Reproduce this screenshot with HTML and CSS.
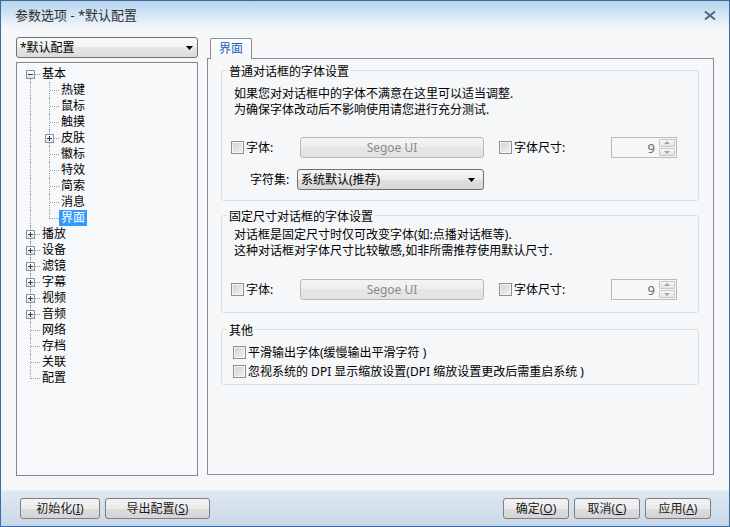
FILE: index.html
```html
<!DOCTYPE html>
<html lang="zh-CN">
<head>
<meta charset="utf-8">
<title>参数选项</title>
<link rel="stylesheet" href="styles.css">
</head>
<body>
<div class="window">
  <header class="titlebar">
    <span class="title">参数选项 - *默认配置</span>
    <svg class="close" width="12" height="9" viewBox="0 0 12 9"><path d="M1 0.5L11 8.5M11 0.5L1 8.5" stroke="#56677d" stroke-width="2" fill="none"/></svg>
  </header>

  <main class="main">
    <aside class="left">
      <div class="combo">
        <span class="combo-text">*默认配置</span>
        <svg class="arrow" width="7" height="4" viewBox="0 0 7 4"><path d="M0 0H7L3.5 4Z" fill="#000"/></svg>
      </div>
      <ul class="tree">
        <li class="row"><span class="g root"><i class="exp minus"></i></span><span class="lbl">基本</span></li>
        <li class="row"><span class="g v"></span><span class="g t"></span><span class="lbl">热键</span></li>
        <li class="row"><span class="g v"></span><span class="g t"></span><span class="lbl">鼠标</span></li>
        <li class="row"><span class="g v"></span><span class="g t"></span><span class="lbl">触摸</span></li>
        <li class="row"><span class="g v"></span><span class="g t"><i class="exp plus"></i></span><span class="lbl">皮肤</span></li>
        <li class="row"><span class="g v"></span><span class="g t"></span><span class="lbl">徽标</span></li>
        <li class="row"><span class="g v"></span><span class="g t"></span><span class="lbl">特效</span></li>
        <li class="row"><span class="g v"></span><span class="g t"></span><span class="lbl">简索</span></li>
        <li class="row"><span class="g v"></span><span class="g t"></span><span class="lbl">消息</span></li>
        <li class="row"><span class="g v"></span><span class="g l"></span><span class="lbl sel">界面</span></li>
        <li class="row"><span class="g t"><i class="exp plus"></i></span><span class="lbl">播放</span></li>
        <li class="row"><span class="g t"><i class="exp plus"></i></span><span class="lbl">设备</span></li>
        <li class="row"><span class="g t"><i class="exp plus"></i></span><span class="lbl">滤镜</span></li>
        <li class="row"><span class="g t"><i class="exp plus"></i></span><span class="lbl">字幕</span></li>
        <li class="row"><span class="g t"><i class="exp plus"></i></span><span class="lbl">视频</span></li>
        <li class="row"><span class="g t"><i class="exp plus"></i></span><span class="lbl">音频</span></li>
        <li class="row"><span class="g t"></span><span class="lbl">网络</span></li>
        <li class="row"><span class="g t"></span><span class="lbl">存档</span></li>
        <li class="row"><span class="g t"></span><span class="lbl">关联</span></li>
        <li class="row"><span class="g l"></span><span class="lbl">配置</span></li>
      </ul>
    </aside>

    <section class="right">
      <div class="tabs"><div class="tab">界面</div></div>
      <div class="panel">
        <fieldset class="group g1">
          <legend>普通对话框的字体设置</legend>
          <div class="gbody">
            <p class="desc">如果您对对话框中的字体不满意在这里可以适当调整.<br>为确保字体改动后不影响使用请您进行充分测试.</p>
            <div class="frow">
              <label class="chk w1"><span class="box"></span><span>字体:</span></label>
              <span class="fontbtn">Segoe UI</span>
              <label class="chk w2"><span class="box"></span><span>字体尺寸:</span></label>
              <span class="spin"><span class="num">9</span><span class="spinbtns"><span class="sb up"></span><span class="sb down"></span></span></span>
            </div>
            <div class="frow charset">
              <span class="cs-label">字符集:</span>
              <span class="select"><span>系统默认(推荐)</span><svg width="7" height="4" viewBox="0 0 7 4"><path d="M0 0H7L3.5 4Z" fill="#000"/></svg></span>
            </div>
          </div>
        </fieldset>

        <fieldset class="group g2">
          <legend>固定尺寸对话框的字体设置</legend>
          <div class="gbody">
            <p class="desc">对话框是固定尺寸时仅可改变字体(如:点播对话框等).<br>这种对话框对字体尺寸比较敏感,如非所需推荐使用默认尺寸.</p>
            <div class="frow">
              <label class="chk w1"><span class="box"></span><span>字体:</span></label>
              <span class="fontbtn">Segoe UI</span>
              <label class="chk w2"><span class="box"></span><span>字体尺寸:</span></label>
              <span class="spin"><span class="num">9</span><span class="spinbtns"><span class="sb up"></span><span class="sb down"></span></span></span>
            </div>
          </div>
        </fieldset>

        <fieldset class="group g3">
          <legend>其他</legend>
          <div class="gbody">
            <label class="chk line"><span class="box"></span><span>平滑输出字体(缓慢输出平滑字符 )</span></label>
            <label class="chk line"><span class="box"></span><span>忽视系统的 DPI 显示缩放设置(DPI 缩放设置更改后需重启系统 )</span></label>
          </div>
        </fieldset>
      </div>
    </section>
  </main>

  <footer class="footer">
    <span class="btn b-init">初始化(<u>I</u>)</span>
    <span class="btn b-export">导出配置(<u>S</u>)</span>
    <span class="spacer"></span>
    <span class="btn b-std">确定(<u>O</u>)</span>
    <span class="btn b-std">取消(<u>C</u>)</span>
    <span class="btn b-std">应用(<u>A</u>)</span>
  </footer>
</div>
</body>
</html>
```

FILE: styles.css
```css
* { box-sizing: border-box; }

html, body {
  margin: 0;
  padding: 0;
}

body {
  width: 730px;
  height: 527px;
  overflow: hidden;
  font-family: "Noto Sans", "Noto Sans CJK SC", sans-serif;
  font-size: 12px;
  line-height: 16px;
  color: #000;
}

.window {
  width: 730px;
  height: 527px;
  border: 1px solid #3a6ca3;
  display: flex;
  flex-direction: column;
  background: #f5f7f9;
}

/* ---------- title bar ---------- */
.titlebar {
  height: 29px;
  flex: none;
  display: flex;
  align-items: center;
  justify-content: space-between;
  padding: 0 13px 1px 14px;
  background: linear-gradient(#b7d4ed, #d3e5f4 45%, #eef4f9 85%, #f4f7fa);
}

.title {
  font-size: 13px;
  color: #2e2e2e;
}

/* ---------- main area ---------- */
.main {
  flex: 1;
  display: flex;
  gap: 9px;
  padding: 7px 15px 0 15px;
  min-height: 0;
}

.left {
  width: 182px;
  flex: none;
  display: flex;
  flex-direction: column;
}

.combo {
  height: 21px;
  flex: none;
  margin-bottom: 4px;
  border: 1px solid #707070;
  border-radius: 3px;
  background: linear-gradient(#fbfbfb, #f1f1f1 50%, #e6e6e6 50%, #dcdcdc);
  display: flex;
  align-items: center;
  justify-content: space-between;
  padding: 0 4px 0 3px;
}

/* ---------- tree ---------- */
.tree {
  list-style: none;
  margin: 0;
  height: 414px;
  border: 1px solid #828790;
  background: #f6f8fa;
  padding: 3px 0 0 4px;
}

.row {
  display: flex;
  height: 16px;
}

.g {
  position: relative;
  flex: none;
  width: 19px;
  height: 16px;
}

.g::before,
.g::after {
  content: "";
  position: absolute;
}

.g.v::before,
.g.t::before {
  left: 9px;
  top: 0;
  bottom: 0;
  border-left: 1px dotted #a0a0a0;
}

.g.l::before {
  left: 9px;
  top: 0;
  height: 9px;
  border-left: 1px dotted #a0a0a0;
}

.g.root::before {
  left: 9px;
  top: 8px;
  bottom: 0;
  border-left: 1px dotted #a0a0a0;
}

.g.t::after,
.g.l::after,
.g.root::after {
  left: 10px;
  right: 0;
  top: 8px;
  border-top: 1px dotted #a0a0a0;
}

.exp {
  position: absolute;
  left: 5px;
  top: 4px;
  width: 9px;
  height: 9px;
  border: 1px solid #8e9297;
  background: linear-gradient(#ffffff, #dfe2e6);
  z-index: 1;
}

.exp::before {
  content: "";
  position: absolute;
  left: 1px;
  top: 3px;
  width: 5px;
  height: 1px;
  background: #23406f;
}

.exp.plus::after {
  content: "";
  position: absolute;
  left: 3px;
  top: 1px;
  width: 1px;
  height: 5px;
  background: #23406f;
}

.lbl {
  padding: 0 2px;
  height: 16px;
  line-height: 16px;
  white-space: nowrap;
}

.lbl.sel {
  background: #3399ff;
  color: #fff;
}

/* ---------- right side ---------- */
.right {
  flex: 1;
  display: flex;
  flex-direction: column;
  min-width: 0;
}

.tabs {
  display: flex;
  padding-left: 3px;
  margin-top: 1px;
  height: 20px;
  flex: none;
}

.tab {
  width: 42px;
  height: 21px;
  border: 1px solid #898c95;
  border-bottom: none;
  border-radius: 2px 2px 0 0;
  background: linear-gradient(#fcfdfe, #f5f7f9);
  color: #1d63b4;
  padding-left: 8px;
  line-height: 19px;
  position: relative;
  z-index: 1;
}

.panel {
  height: 417px;
  border: 1px solid #898c95;
  background: #f5f7f9;
  padding: 1px 14px 0 13px;
}

.group {
  margin: 0;
  padding: 0;
  min-width: 0;
  border: 1px solid #d5dde4;
  border-radius: 3px;
}

.group legend {
  margin-left: 5px;
  padding: 4px 2px 0;
  line-height: 16px;
}

.g2 { margin-top: 4px; }
.g3 { margin-top: 6px; }

.desc {
  margin: 0;
  padding-left: 12px;
  line-height: 16px;
}

.g1 .gbody { padding: 6px 0 10px; }
.g2 .gbody { padding: 2px 0 12px; }
.g3 .gbody { padding: 4px 0 3px; }

.frow {
  display: flex;
  align-items: center;
  height: 21px;
  padding-left: 9px;
  margin-top: 19px;
}

.g2 .frow { margin-top: 20px; }

.frow.charset {
  margin-top: 11px;
  padding-left: 0;
}

.chk {
  display: flex;
  align-items: center;
  gap: 2px;
  white-space: nowrap;
}

.chk.w1 { width: 69px; }
.chk.w2 { width: 112px; margin-left: 15px; }

.chk.line {
  height: 19px;
  padding-left: 11px;
}

.box {
  flex: none;
  width: 13px;
  height: 13px;
  border: 1px solid #8e8f8f;
  background: linear-gradient(135deg, #cfd0d1, #f3f3f3);
  box-shadow: inset 0 0 0 1px #f4f4f4;
}

.fontbtn {
  width: 184px;
  height: 21px;
  border: 1px solid #b5b8bb;
  border-radius: 3px;
  background: linear-gradient(#f4f4f4, #eeeeee 50%, #e6e6e6 50%, #e3e3e3);
  color: #8a8a8a;
  text-align: center;
  line-height: 19px;
}

.spin {
  width: 66px;
  height: 21px;
  border: 1px solid #b8babd;
  display: flex;
  align-items: center;
  justify-content: flex-end;
  padding-right: 1px;
}

.num {
  font-size: 13px;
  color: #6a6a6a;
}

.spinbtns {
  display: flex;
  flex-direction: column;
  gap: 1px;
  width: 16px;
  margin-left: 4px;
}

.sb {
  position: relative;
  height: 8px;
  border: 1px solid #c5c7c9;
  border-radius: 1px;
  background: linear-gradient(#f7f7f7, #e4e4e4);
}

.sb::after {
  content: "";
  position: absolute;
  left: 4px;
  width: 0;
  height: 0;
  border-left: 3px solid transparent;
  border-right: 3px solid transparent;
}

.sb.up::after {
  top: 1px;
  border-bottom: 3px solid #a3a3a3;
}

.sb.down::after {
  top: 2px;
  border-top: 3px solid #a3a3a3;
}

.cs-label {
  width: 75px;
  padding-left: 28px;
}

.select {
  width: 187px;
  height: 21px;
  border: 1px solid #707070;
  border-radius: 3px;
  background: linear-gradient(#f6f6f6, #ececec 50%, #e0e0e0 50%, #d8d8d8);
  display: flex;
  align-items: center;
  justify-content: space-between;
  padding: 0 8px 0 3px;
}

/* ---------- footer ---------- */
.footer {
  height: 36px;
  flex: none;
  display: flex;
  align-items: center;
  gap: 5px;
  padding: 0 18px 1px 19px;
  border-top: 1px solid #e8eef4;
  background: linear-gradient(#dfe8f1, #c9d8e8);
}

.spacer { flex: 1; }

.btn {
  height: 21px;
  border: 1px solid #7d7f82;
  border-radius: 3px;
  background: linear-gradient(#f3f3f3, #ececec 50%, #dedede 50%, #d4d4d4);
  text-align: center;
  line-height: 19px;
  color: #1b1b1b;
  white-space: nowrap;
}

.b-init { width: 80px; }
.b-export { width: 105px; }
.b-std { width: 66px; }
```
